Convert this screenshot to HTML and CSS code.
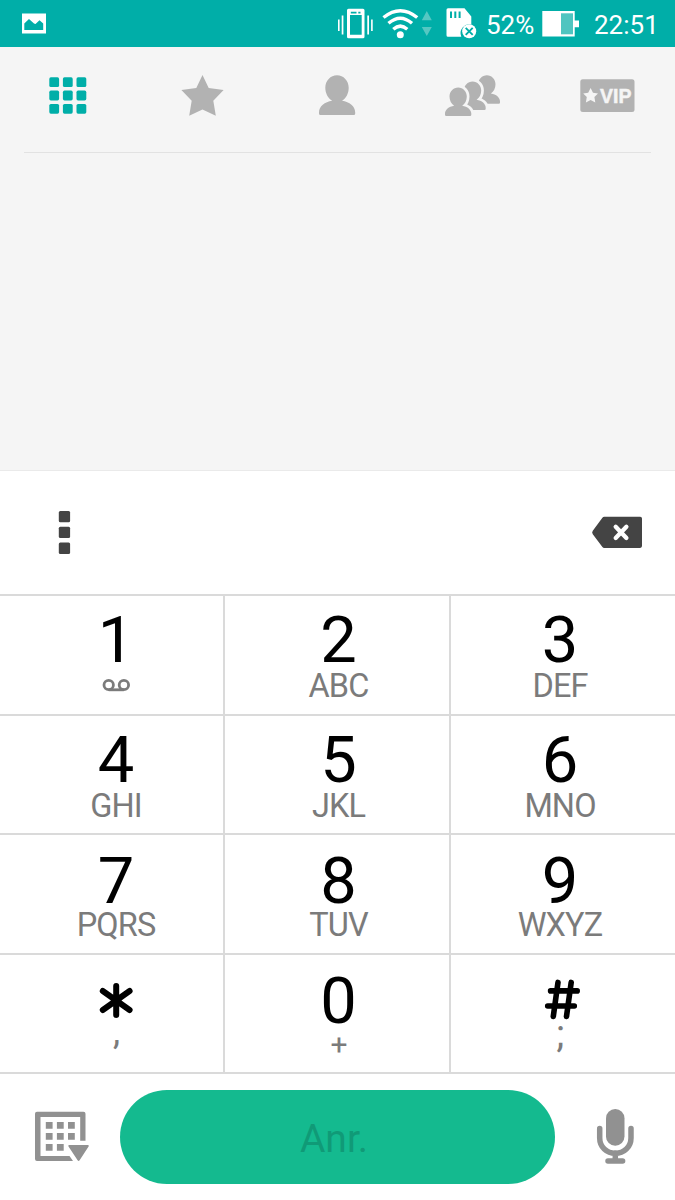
FILE: index.html
```html
<!DOCTYPE html>
<html lang="de">
<head>
<meta charset="utf-8">
<title>Telefon</title>
<link rel="stylesheet" href="styles.css">
</head>
<body>
<div class="phone">
  <header class="status">
    <svg class="status-photo" width="26" height="47" viewBox="21 0 26 47">
      <path fill="#fff" fill-rule="evenodd" d="M22 13.500h24v20H22zM24.300 30h18.900v-6.500l-3.700-3.300-4 3.700-1.500-.3-5-4.700-4.700 4.600z"/>
    </svg>
    <div class="status-right">
      <svg width="140" height="47" viewBox="337 0 140 47">
        <g fill="#fff">
          <path fill-rule="evenodd" d="M348.500 8.700h14.500q1.500 0 1.500 1.500v26.500q0 1.500-1.500 1.500h-14.500q-1.500 0-1.500-1.500V10.200q0-1.500 1.500-1.500zM350 15v19.800h11.700V15zM350.800 11.800v1.700h5.700v-1.700zM358.300 11.800v1.700h2.200v-1.700z"/>
          <path d="M338 19.500h1.600v11.500H338zM341.700 15.500h1.700v19h-1.700zM367.300 15.500h1.700v19h-1.700zM371.100 19.500h1.600v11.500h-1.600z"/>
          <circle cx="400.300" cy="34.700" r="3.500"/>
        </g>
        <g fill="none" stroke="#fff" stroke-width="3.400">
          <path d="M383.500 17.500Q400.300 3.800 417.200 17.500"/>
          <path d="M388.500 23.300Q400.300 13 412 23.300"/>
          <path d="M393.300 29.300Q400.300 23 407.300 29.300"/>
        </g>
        <path fill="#55c7c2" d="M426.800 11l5 9.200h-10zM426.800 36l5-9h-10z"/>
        <path fill="#fff" d="M448 8.200h16.500l6.800 8.200v8a9 9 0 0 0-10 12.300H448q-1.500 0-1.500-1.500V9.700q0-1.500 1.500-1.500z"/>
        <path stroke="#00aea8" stroke-width="2" d="M451 11.500v6.500M455.300 11.500v6.500M459.600 11.500v6.500"/>
        <circle cx="469.200" cy="31.300" r="7" fill="#fff"/>
        <path stroke="#00aea8" stroke-width="1.900" d="M465.700 27.800l7 7M472.700 27.800l-7 7"/>
      </svg>
      <span class="status-text percent">52%</span>
      <svg class="battery" width="38" height="47" viewBox="541 0 38 47">
        <path fill="#fff" d="M542.300 11h32.400v9.500h4.300v6.800h-4.300v9.200h-32.400z"/>
        <path fill="#4fc5c0" d="M561 13.300h12v21h-12z"/>
      </svg>
      <span class="status-text clock">22:51</span>
    </div>
  </header>

  <nav class="tabs">
    <a class="tab"><svg width="44" height="44" viewBox="45 74 44 44" fill="#00aea8">
      <rect x="49.300" y="77.300" width="9.800" height="9.800" rx="1.600"/><rect x="62.900" y="77.300" width="9.800" height="9.800" rx="1.600"/><rect x="76.500" y="77.300" width="9.800" height="9.800" rx="1.600"/>
      <rect x="49.300" y="90.600" width="9.800" height="9.800" rx="1.600"/><rect x="62.900" y="90.600" width="9.800" height="9.800" rx="1.600"/><rect x="76.500" y="90.600" width="9.800" height="9.800" rx="1.600"/>
      <rect x="49.300" y="103.900" width="9.800" height="9.800" rx="1.600"/><rect x="62.900" y="103.900" width="9.800" height="9.800" rx="1.600"/><rect x="76.500" y="103.900" width="9.800" height="9.800" rx="1.600"/>
    </svg></a>
    <a class="tab"><svg width="44" height="44" viewBox="180 74 44 44" fill="#b2b2b2">
      <path d="M202.500 75l6.200 12.900 14.900 2.100-10.300 10.700 2.500 15-13.300-6.300-13.300 6.300 2.500-15-10.300-10.700 14.900-2.100z"/>
    </svg></a>
    <a class="tab"><svg width="44" height="44" viewBox="315 74 44 44" fill="#b2b2b2">
      <path d="M337 75.300c6.500 0 11.700 5.500 11.700 12.500 0 5.500-2.500 10.500-6.700 13 7.500 1 13.200 5.600 13.200 11.700v1q0 1.500-1.500 1.500h-33.200q-1.500 0-1.500-1.500v-1c0-6.100 5.700-10.700 13.200-11.700-4.200-2.500-6.900-7.500-6.900-13 0-7 5.200-12.500 11.700-12.500z"/>
    </svg></a>
    <a class="tab"><svg width="60" height="44" viewBox="442 74 60 44" fill="#b2b2b2">
      <defs><path id="person" d="M458.200 87.500c4.900 0 8.600 4 8.600 9 0 4-1.800 7.300-4.600 9.300 5.300.7 9.100 4 9.100 8v1q0 1.200-1.200 1.200h-23.900q-1.200 0-1.200-1.200v-1c0-4 3.800-7.300 9.100-8-2.800-2-4.600-5.300-4.600-9.300 0-5 3.800-9 8.700-9z"/></defs>
      <use href="#person" x="28.700" y="-12.200"/>
      <use href="#person" x="14.400" y="-6.100" stroke="#f5f5f5" stroke-width="5.400"/>
      <use href="#person" x="14.400" y="-6.100"/>
      <use href="#person" stroke="#f5f5f5" stroke-width="5.400"/>
      <use href="#person"/>
    </svg></a>
    <a class="tab"><svg width="56" height="44" viewBox="579 74 56 44">
      <rect x="580.300" y="79.200" width="54.200" height="32.800" rx="2.500" fill="#b2b2b2"/>
      <path fill="#f5f5f5" d="M590.600 88l2.400 4.800 5 .7-3.600 3.600.9 5.400-4.700-2.600-4.700 2.600.9-5.400-3.600-3.600 5-.7z"/>
      <text class="vip" x="600" y="102.800" textLength="31.500">VIP</text>
    </svg></a>
  </nav>
  <main class="history"></main>

  <section class="entry">
    <svg width="14" height="46" viewBox="57 509 14 46" fill="#444">
      <rect x="58.800" y="511" width="11.300" height="11.300" rx="1.500"/><rect x="58.800" y="526.800" width="11.300" height="11.300" rx="1.500"/><rect x="58.800" y="542.600" width="11.300" height="11.300" rx="1.500"/>
    </svg>
    <svg width="54" height="46" viewBox="590 509 54 46">
      <path fill="#444" d="M604.200 516.800H640.200q1.800 0 1.800 1.800v27.500q0 1.800-1.800 1.800H604.200q-1 0-1.800-1l-9.600-12.700q-1.300-1.700 0-3.500l9.600-12.900q.8-1 1.800-1z"/>
      <path stroke="#fff" stroke-width="4.300" stroke-linecap="round" d="M615.700 526.700l10.700 11.300M626.400 526.700l-10.700 11.300"/>
    </svg>
  </section>

  <section class="keypad">
    <button class="key"><span class="digit">1</span>
      <svg class="voicemail" width="30" height="31" viewBox="101.500 670 30 31" fill="none" stroke="#7b7b7b" stroke-width="2.800"><circle cx="109.200" cy="685" r="4.700"/><circle cx="124.400" cy="685" r="4.700"/><path d="M109.200 689.800h15.200"/></svg></button>
    <button class="key"><span class="digit">2</span><span class="letters">ABC</span></button>
    <button class="key"><span class="digit">3</span><span class="letters">DEF</span></button>
    <button class="key"><span class="digit">4</span><span class="letters">GHI</span></button>
    <button class="key"><span class="digit">5</span><span class="letters">JKL</span></button>
    <button class="key"><span class="digit">6</span><span class="letters">MNO</span></button>
    <button class="key low"><span class="digit">7</span><span class="letters">PQRS</span></button>
    <button class="key low"><span class="digit">8</span><span class="letters">TUV</span></button>
    <button class="key low"><span class="digit">9</span><span class="letters">WXYZ</span></button>
    <button class="key low"><svg class="symbol" width="40" height="60" viewBox="96 970 40 60" fill="none" stroke="#000" stroke-width="6" stroke-linecap="round"><path d="M116.200 985v29M102.800 990l26.800 19M129.600 990l-26.800 19"/></svg><span class="letters comma">,</span></button>
    <button class="key low"><span class="digit">0</span><span class="letters plus">+</span></button>
    <button class="key low"><svg class="symbol" width="40" height="60" viewBox="540 970.600 40 60" fill="none" stroke="#000" stroke-width="5.600" stroke-linecap="round"><path d="M558 982l-4.700 34M571.200 982l-4.700 34M550.600 990.500h26.600M547.700 1005.600h26.600"/></svg><span class="letters semicolon">;</span></button>
  </section>

  <footer class="actions">
    <svg width="56" height="54" viewBox="34 1110 56 54" fill="#919191">
      <path d="M37 1111.700h46.500q2 0 2 2v27h-5.300v-23.700H40.500v39h29l3.500 5H37q-2 0-2-2v-45.300q0-2 2-2z"/>
      <path d="M45.800 1122h6.800v6.800h-6.800zM56.900 1122h6.800v6.800h-6.800zM68 1122h6.800v6.800H68zM45.800 1133h6.800v6.800h-6.800zM56.900 1133h6.800v6.800h-6.800zM68 1133h6.800v6.800H68zM45.800 1144h6.800v6.800h-6.800zM56.900 1144h6.800v6.800h-6.800z"/>
      <path d="M69.300 1145h18.500q1.800 0 .8 1.600l-9 13.700q-1 1.500-2 0l-9.100-13.700q-1-1.600.8-1.600z"/>
    </svg>
    <button class="call">Anr.</button>
    <svg width="40" height="58" viewBox="595 1108 40 58">
      <rect x="606" y="1109" width="18.500" height="36.800" rx="9.200" fill="#919191"/>
      <path d="M599.700 1128.500v9.500c0 9 7 15.400 15.600 15.400s15.700-6.400 15.700-15.400v-9.500M615.300 1153v8M608 1161h14.600" fill="none" stroke="#919191" stroke-width="5.500" stroke-linecap="round"/>
    </svg>
  </footer>
</div>
</body>
</html>
```
FILE: styles.css
```css
* { box-sizing: border-box; }
body { margin: 0; background: #fff; font-family: Roboto, "Noto Sans", sans-serif; }
svg { display: block; flex: none; }
button { border: 0; margin: 0; padding: 0; background: none; font: inherit; }

.phone { width: 675px; height: 1200px; display: flex; flex-direction: column; overflow: hidden; }

.status { flex: none; height: 47px; padding-left: 21px; display: flex; justify-content: space-between; background: #00aea8; color: #fff; }
.status-right { display: flex; width: 338px; }
.status-text { font-size: 26px; line-height: 50px; height: 47px; white-space: nowrap; }
.percent { width: 55px; padding-left: 9px; }
.battery { margin-left: 9px; }
.clock { margin-left: 15px; }

.tabs { flex: none; height: 106px; margin: 0 24px; padding-top: 27px; display: grid; grid-template-columns: repeat(5, 135px); justify-content: center; background: #f5f5f5; border-bottom: 1px solid #e2e2e2; box-shadow: -24px 0 #f5f5f5, 24px 0 #f5f5f5; }
.tab { display: flex; justify-content: center; padding-right: 1px; }
.vip { font: bold 19.5px "Liberation Sans", sans-serif; fill: #f5f5f5; stroke: #f5f5f5; stroke-width: 0.5px; }

.history { flex: none; height: 318px; background: #f5f5f5; border-bottom: 1px solid #eaeaea; }

.entry { flex: none; height: 123px; padding: 38px 31px 0 57px; display: flex; justify-content: space-between; }

.keypad { flex: none; height: 480px; display: grid; grid-template-columns: 225px 226px 224px; grid-template-rows: 120px 119px 120px 119px; border-bottom: 2px solid #dadada; }
.key { display: flex; flex-direction: column; align-items: center; border-top: 2px solid #dadada; border-right: 2px solid #dadada; padding-top: 14px; overflow: hidden; }
.key:nth-child(3n+1) { padding-left: 9px; }
.key:nth-child(3n+2) { padding-left: 3px; }
.key:nth-child(3n) { border-right: 0; padding-right: 6px; }
.digit { height: 60px; font-size: 65px; line-height: 60px; color: #000; }
.letters { margin-top: 1px; font-size: 32.5px; line-height: 31px; letter-spacing: -0.9px; color: #7b7b7b; }
.low { padding-top: 16px; }
.low .letters { margin-top: -1px; }
.low .comma { margin-top: -14px; font-size: 36px; }
.low .plus { margin-top: -2px; font-size: 30px; }
.low .semicolon { margin-top: -12px; font-size: 39px; }

.actions { flex: 1; display: flex; align-items: flex-start; padding: 16px 40px 0 34px; justify-content: space-between; }
.actions svg { margin-top: 18px; }
.actions svg:first-child { margin-top: 20px; }
.call { width: 435px; height: 94px; margin-left: -10px; padding-right: 7px; padding-top: 4px; border-radius: 47px; background: #14ba8f; color: #109a77; font-size: 39px; line-height: 90px; }
```
